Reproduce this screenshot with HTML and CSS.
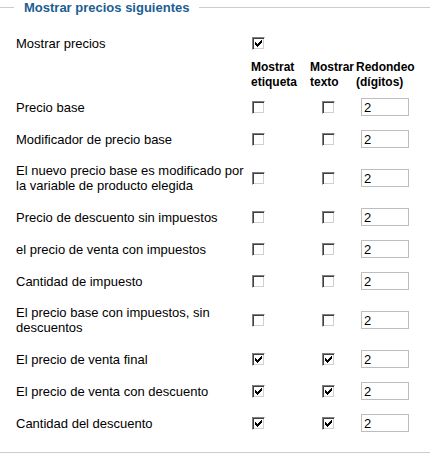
FILE: index.html
```html
<!DOCTYPE html>
<html lang="es">
<head>
<meta charset="utf-8">
<title>Mostrar precios siguientes</title>
<link rel="stylesheet" href="styles.css">
</head>
<body>
<svg class="defs" width="0" height="0" aria-hidden="true">
  <symbol id="chk" viewBox="0 0 7 7">
    <path d="M0 2h1v3H0zM1 3h1v3H1zM2 4h1v3H2zM3 3h1v3H3zM4 2h1v3H4zM5 1h1v3H5zM6 0h1v3H6z" fill="#000"/>
  </symbol>
</svg>
<fieldset class="prices">
  <legend class="prices-title">Mostrar precios siguientes</legend>
  <table class="grid">
    <colgroup>
      <col class="c-label"><col class="c-lbl"><col class="c-txt"><col class="c-rnd">
    </colgroup>
    <tbody>
      <tr>
        <td class="label">Mostrar precios</td>
        <td class="cell"><span class="cb on"><svg><use href="#chk"/></svg></span></td>
        <td></td><td></td>
      </tr>
      <tr class="head">
        <td></td>
        <th>Mostrat<br>etiqueta</th>
        <th>Mostrar<br>texto</th>
        <th>Redondeo<br>(dígitos)</th>
      </tr>
      <tr>
        <td class="label">Precio base</td>
        <td class="cell"><span class="cb"></span></td>
        <td class="cell c2"><span class="cb"></span></td>
        <td class="cell c3"><input class="num" type="text" value="2"></td>
      </tr>
      <tr>
        <td class="label">Modificador de precio base</td>
        <td class="cell"><span class="cb"></span></td>
        <td class="cell c2"><span class="cb"></span></td>
        <td class="cell c3"><input class="num" type="text" value="2"></td>
      </tr>
      <tr>
        <td class="label">El nuevo precio base es modificado por la variable de producto elegida</td>
        <td class="cell"><span class="cb"></span></td>
        <td class="cell c2"><span class="cb"></span></td>
        <td class="cell c3"><input class="num" type="text" value="2"></td>
      </tr>
      <tr>
        <td class="label">Precio de descuento sin impuestos</td>
        <td class="cell"><span class="cb"></span></td>
        <td class="cell c2"><span class="cb"></span></td>
        <td class="cell c3"><input class="num" type="text" value="2"></td>
      </tr>
      <tr>
        <td class="label">el precio de venta con impuestos</td>
        <td class="cell"><span class="cb"></span></td>
        <td class="cell c2"><span class="cb"></span></td>
        <td class="cell c3"><input class="num" type="text" value="2"></td>
      </tr>
      <tr>
        <td class="label">Cantidad de impuesto</td>
        <td class="cell"><span class="cb"></span></td>
        <td class="cell c2"><span class="cb"></span></td>
        <td class="cell c3"><input class="num" type="text" value="2"></td>
      </tr>
      <tr>
        <td class="label">El precio base con impuestos, sin descuentos</td>
        <td class="cell"><span class="cb"></span></td>
        <td class="cell c2"><span class="cb"></span></td>
        <td class="cell c3"><input class="num" type="text" value="2"></td>
      </tr>
      <tr>
        <td class="label">El precio de venta final</td>
        <td class="cell"><span class="cb on"><svg><use href="#chk"/></svg></span></td>
        <td class="cell c2"><span class="cb on"><svg><use href="#chk"/></svg></span></td>
        <td class="cell c3"><input class="num" type="text" value="2"></td>
      </tr>
      <tr>
        <td class="label">El precio de venta con descuento</td>
        <td class="cell"><span class="cb on"><svg><use href="#chk"/></svg></span></td>
        <td class="cell c2"><span class="cb on"><svg><use href="#chk"/></svg></span></td>
        <td class="cell c3"><input class="num" type="text" value="2"></td>
      </tr>
      <tr>
        <td class="label">Cantidad del descuento</td>
        <td class="cell"><span class="cb on"><svg><use href="#chk"/></svg></span></td>
        <td class="cell c2"><span class="cb on"><svg><use href="#chk"/></svg></span></td>
        <td class="cell c3"><input class="num" type="text" value="2"></td>
      </tr>
    </tbody>
  </table>
</fieldset>
</body>
</html>
```
FILE: styles.css
```css
html, body {
  margin: 0;
  padding: 0;
  background: #fff;
}
body {
  font-family: "Liberation Sans", Arial, sans-serif;
  font-size: 13px;
  color: #000;
}
.defs {
  position: absolute;
  width: 0;
  height: 0;
  overflow: hidden;
}
.prices {
  margin: 0;
  padding: 12px 0 13px 16px;
  border: 0;
  border-top: 1px solid #cccccc;
  border-bottom: 1px solid #cccccc;
  min-width: 0;
}
.prices-title {
  margin-left: -2px;
  padding: 0 10px;
  font-weight: bold;
  font-size: 13px;
  line-height: 15px;
  color: #1c5d93;
}
.grid {
  border-collapse: collapse;
  table-layout: fixed;
  width: 394px;
}
.c-label { width: 232px; }
.c-lbl { width: 59px; }
.c-txt { width: 46px; }
.c-rnd { width: 57px; }
.grid td, .grid th {
  padding: 0;
  vertical-align: middle;
  text-align: left;
}
.label {
  line-height: 15px;
  padding: 8px 0 !important;
}
.cell {
  height: 20px;
  padding: 6px 0 6px 4px !important;
}
.c2 { padding-left: 15px !important; }
.c3 { padding-left: 8px !important; }
.head th {
  font-weight: bold;
  font-size: 12px;
  line-height: 15px;
  padding: 1px 0 1px 3px;
  white-space: nowrap;
}
.cb {
  display: block;
  box-sizing: border-box;
  width: 13px;
  height: 13px;
  border-style: solid;
  border-width: 1px;
  border-color: #808080 #ffffff #ffffff #808080;
  box-shadow: inset 1px 1px 0 #404040, inset -1px -1px 0 #d4d0c8;
  background: #fff;
  position: relative;
}
.cb svg {
  position: absolute;
  left: 2px;
  top: 2px;
  width: 7px;
  height: 7px;
  shape-rendering: crispEdges;
}
.num {
  display: block;
  box-sizing: border-box;
  width: 48px;
  height: 18px;
  margin: 1px 0;
  padding: 0 2px;
  border: 1px solid #bdbdbd;
  font-family: "Liberation Sans", Arial, sans-serif;
  font-size: 13px;
  color: #000;
  background: #fff;
  outline: none;
}
```
